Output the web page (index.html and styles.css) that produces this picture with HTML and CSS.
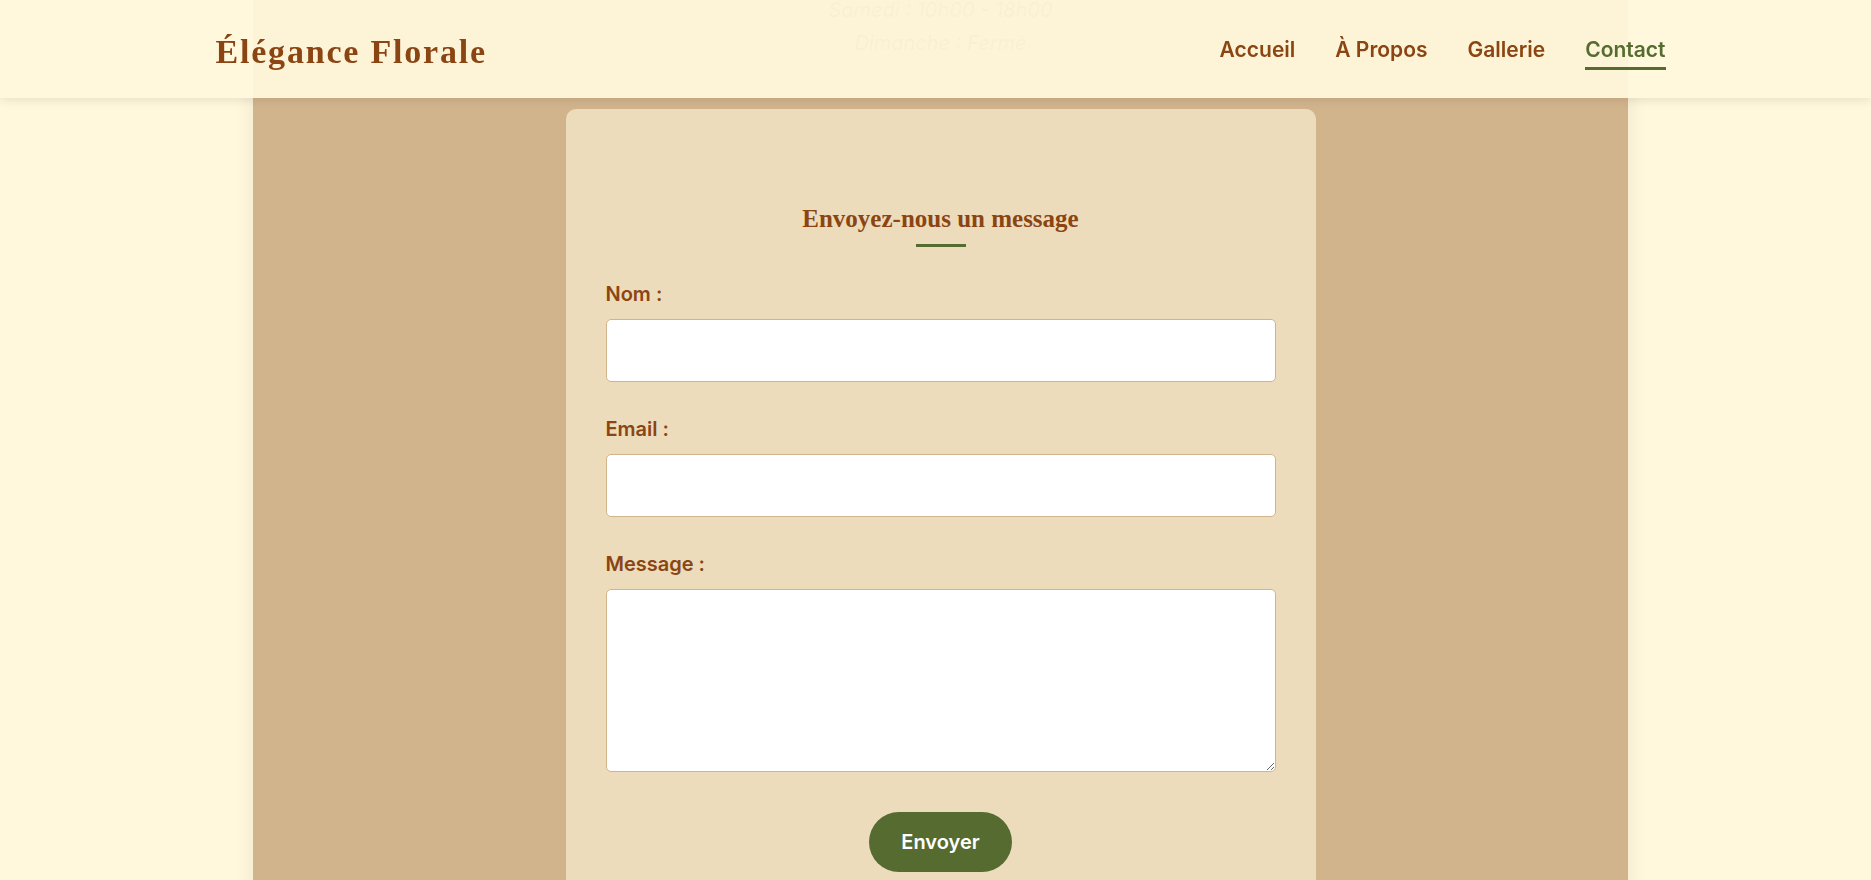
FILE: index.html
```html
<!DOCTYPE html>
<html lang="fr">
<head>
    <meta charset="utf-8">
    <title>Élégance Florale - Contact</title>
    <meta name="viewport" content="width=device-width, initial-scale=1">
    <link rel="stylesheet" href="styles.css">
</head>
<body>
    <header class="site-header">
        <div class="header-inner">
            <div class="logo">Élégance Florale</div>
            <nav class="main-nav">
                <a href="#" class="nav-link">Accueil</a>
                <a href="#" class="nav-link">À Propos</a>
                <a href="#" class="nav-link">Gallerie</a>
                <a href="#" class="nav-link active">Contact</a>
            </nav>
        </div>
    </header>

    <main class="page">
        <div class="hours">
            <p>Samedi : 10h00 - 18h00</p>
            <p>Dimanche : Fermé</p>
        </div>

        <section class="contact-card">
            <h2 class="card-title">Envoyez-nous un message</h2>
            <div class="title-bar"></div>

            <form class="contact-form">
                <div class="field">
                    <label for="nom">Nom :</label>
                    <input type="text" id="nom" name="nom">
                </div>
                <div class="field">
                    <label for="email">Email :</label>
                    <input type="email" id="email" name="email">
                </div>
                <div class="field">
                    <label for="message">Message :</label>
                    <textarea id="message" name="message"></textarea>
                </div>
                <div class="actions">
                    <button type="submit" class="send-btn">Envoyer</button>
                </div>
            </form>
        </section>
    </main>
</body>
</html>
```

FILE: styles.css
```css
html {
    scrollbar-width: none;
}

body {
    font-family: Inter, "Noto Sans", sans-serif;
    margin: 0;
    padding-left: 10px;
    background-color: #fff8dc;
    color: #8b4513;
}

.site-header {
    position: fixed;
    top: 0;
    left: 0;
    right: 0;
    height: 98px;
    padding-left: 10px;
    background-color: rgba(255, 248, 220, 0.95);
    box-shadow: 0 2px 10px rgba(0, 0, 0, 0.1);
    z-index: 10;
}

.header-inner {
    width: 1450px;
    height: 100%;
    margin: 0 auto;
    display: flex;
    align-items: center;
    justify-content: space-between;
}

.logo {
    font-family: "Liberation Serif", serif;
    font-weight: bold;
    font-size: 34px;
    line-height: 38px;
    padding-top: 5px;
    letter-spacing: 1.8px;
    color: #8b4513;
}

.main-nav {
    display: flex;
    gap: 40px;
}

.nav-link {
    position: relative;
    font-size: 21px;
    line-height: 25px;
    font-weight: 600;
    color: #8b4513;
    text-decoration: none;
}

.nav-link.active {
    color: #556b2f;
}

.nav-link.active::after {
    content: "";
    position: absolute;
    left: 0;
    right: 0;
    bottom: -8px;
    height: 3px;
    background-color: #556b2f;
}

.page {
    width: 1375px;
    min-height: 100vh;
    margin: 0 auto;
    background-color: #d2b48c;
    box-shadow: 0 0 20px rgba(0, 0, 0, 0.08);
    padding-bottom: 40px;
}

.hours {
    margin-top: -6px;
    text-align: center;
    font-style: italic;
    font-size: 20px;
    line-height: 33px;
    color: #6b5a3c;
}

.hours p {
    margin: 0;
}

.contact-card {
    width: 750px;
    box-sizing: border-box;
    margin: 49px auto 0;
    padding: 95px 40px 40px;
    background-color: #eddcbc;
    border-radius: 10px;
}

.card-title {
    margin: 0;
    text-align: center;
    font-family: "Liberation Serif", serif;
    font-weight: bold;
    font-size: 25px;
    line-height: 30px;
    color: #8b4513;
}

.title-bar {
    width: 50px;
    height: 3px;
    margin: 10px auto 35px;
    background-color: #556b2f;
}

.field {
    display: flex;
    flex-direction: column;
    margin-bottom: 35px;
}

.field label {
    font-size: 20px;
    line-height: 24px;
    font-weight: 600;
    margin-bottom: 13px;
    color: #8b4513;
}

.field input,
.field textarea {
    font-family: inherit;
    font-size: 16px;
    box-sizing: border-box;
    width: 100%;
    border: 1px solid #d2b48c;
    border-radius: 5px;
    background-color: #fff;
    padding: 10px 15px;
}

.field input {
    height: 63px;
}

.field textarea {
    height: 183px;
}

.actions {
    display: flex;
    justify-content: center;
    padding-top: 5px;
}

.send-btn {
    font-family: inherit;
    font-size: 20px;
    line-height: 24px;
    font-weight: 600;
    color: #fff;
    background-color: #556b2f;
    border: none;
    border-radius: 30px;
    width: 143px;
    height: 60px;
    cursor: pointer;
}
```
